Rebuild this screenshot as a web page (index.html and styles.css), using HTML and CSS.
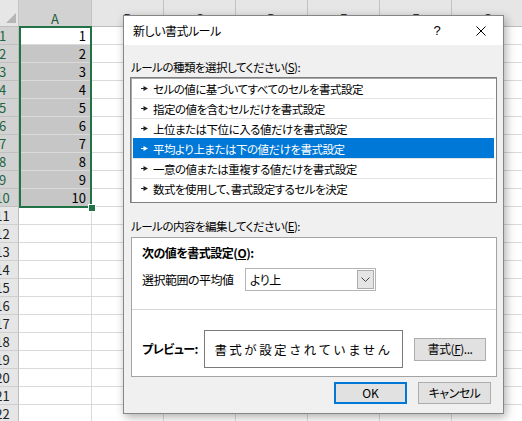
FILE: index.html
```html
<!DOCTYPE html>
<html lang="ja">
<head>
<meta charset="utf-8">
<title>新しい書式ルール</title>
<link rel="stylesheet" href="styles.css">
</head>
<body>
<div class="screen">
  <div class="sheet">
    <div class="corner"></div>
    <div class="ch sel">A</div><div class="ch">B</div><div class="ch">C</div><div class="ch">D</div><div class="ch">E</div><div class="ch">F</div><div class="ch">G</div>

    <div class="rh sel">1</div><div class="c a cur">1</div><div class="c"></div><div class="c"></div><div class="c"></div><div class="c"></div><div class="c"></div><div class="c"></div>
    <div class="rh sel">2</div><div class="c a">2</div><div class="c"></div><div class="c"></div><div class="c"></div><div class="c"></div><div class="c"></div><div class="c"></div>
    <div class="rh sel">3</div><div class="c a">3</div><div class="c"></div><div class="c"></div><div class="c"></div><div class="c"></div><div class="c"></div><div class="c"></div>
    <div class="rh sel">4</div><div class="c a">4</div><div class="c"></div><div class="c"></div><div class="c"></div><div class="c"></div><div class="c"></div><div class="c"></div>
    <div class="rh sel">5</div><div class="c a">5</div><div class="c"></div><div class="c"></div><div class="c"></div><div class="c"></div><div class="c"></div><div class="c"></div>
    <div class="rh sel">6</div><div class="c a">6</div><div class="c"></div><div class="c"></div><div class="c"></div><div class="c"></div><div class="c"></div><div class="c"></div>
    <div class="rh sel">7</div><div class="c a">7</div><div class="c"></div><div class="c"></div><div class="c"></div><div class="c"></div><div class="c"></div><div class="c"></div>
    <div class="rh sel">8</div><div class="c a">8</div><div class="c"></div><div class="c"></div><div class="c"></div><div class="c"></div><div class="c"></div><div class="c"></div>
    <div class="rh sel">9</div><div class="c a">9</div><div class="c"></div><div class="c"></div><div class="c"></div><div class="c"></div><div class="c"></div><div class="c"></div>
    <div class="rh sel">10</div><div class="c a">10</div><div class="c"></div><div class="c"></div><div class="c"></div><div class="c"></div><div class="c"></div><div class="c"></div>
    <div class="rh">11</div><div class="c"></div><div class="c"></div><div class="c"></div><div class="c"></div><div class="c"></div><div class="c"></div><div class="c"></div>
    <div class="rh">12</div><div class="c"></div><div class="c"></div><div class="c"></div><div class="c"></div><div class="c"></div><div class="c"></div><div class="c"></div>
    <div class="rh">13</div><div class="c"></div><div class="c"></div><div class="c"></div><div class="c"></div><div class="c"></div><div class="c"></div><div class="c"></div>
    <div class="rh">14</div><div class="c"></div><div class="c"></div><div class="c"></div><div class="c"></div><div class="c"></div><div class="c"></div><div class="c"></div>
    <div class="rh">15</div><div class="c"></div><div class="c"></div><div class="c"></div><div class="c"></div><div class="c"></div><div class="c"></div><div class="c"></div>
    <div class="rh">16</div><div class="c"></div><div class="c"></div><div class="c"></div><div class="c"></div><div class="c"></div><div class="c"></div><div class="c"></div>
    <div class="rh">17</div><div class="c"></div><div class="c"></div><div class="c"></div><div class="c"></div><div class="c"></div><div class="c"></div><div class="c"></div>
    <div class="rh">18</div><div class="c"></div><div class="c"></div><div class="c"></div><div class="c"></div><div class="c"></div><div class="c"></div><div class="c"></div>
    <div class="rh">19</div><div class="c"></div><div class="c"></div><div class="c"></div><div class="c"></div><div class="c"></div><div class="c"></div><div class="c"></div>
    <div class="rh">20</div><div class="c"></div><div class="c"></div><div class="c"></div><div class="c"></div><div class="c"></div><div class="c"></div><div class="c"></div>
    <div class="rh">21</div><div class="c"></div><div class="c"></div><div class="c"></div><div class="c"></div><div class="c"></div><div class="c"></div><div class="c"></div>
    <div class="rh">22</div><div class="c"></div><div class="c"></div><div class="c"></div><div class="c"></div><div class="c"></div><div class="c"></div><div class="c"></div>
  </div>

  <div class="selection"><span class="handle"></span></div>

  <div class="dialog">
    <div class="titlebar">
      <span class="title">新しい書式ルール</span>
      <span class="help">?</span>
      <span class="close"><svg width="10" height="10" viewBox="0 0 10 10"><path d="M0.5 0.5 L9.5 9.5 M9.5 0.5 L0.5 9.5" stroke="#000" stroke-width="1" fill="none"/></svg></span>
    </div>
    <div class="dbody">
      <div class="label label1">ルールの種類を選択してください(<u>S</u>):</div>
      <ul class="rules">
        <li><svg class="arrow" width="7" height="5" viewBox="0 0 7 5"><path d="M0 2 H3 V3 H0 Z M2.5 0 L7 2.5 L2.5 5 Z"/></svg>セルの値に基づいてすべてのセルを書式設定</li>
        <li><svg class="arrow" width="7" height="5" viewBox="0 0 7 5"><path d="M0 2 H3 V3 H0 Z M2.5 0 L7 2.5 L2.5 5 Z"/></svg>指定の値を含むセルだけを書式設定</li>
        <li><svg class="arrow" width="7" height="5" viewBox="0 0 7 5"><path d="M0 2 H3 V3 H0 Z M2.5 0 L7 2.5 L2.5 5 Z"/></svg>上位または下位に入る値だけを書式設定</li>
        <li class="active"><svg class="arrow" width="7" height="5" viewBox="0 0 7 5"><path d="M0 2 H3 V3 H0 Z M2.5 0 L7 2.5 L2.5 5 Z"/></svg>平均より上または下の値だけを書式設定</li>
        <li><svg class="arrow" width="7" height="5" viewBox="0 0 7 5"><path d="M0 2 H3 V3 H0 Z M2.5 0 L7 2.5 L2.5 5 Z"/></svg>一意の値または重複する値だけを書式設定</li>
        <li><svg class="arrow" width="7" height="5" viewBox="0 0 7 5"><path d="M0 2 H3 V3 H0 Z M2.5 0 L7 2.5 L2.5 5 Z"/></svg>数式を使用して、書式設定するセルを決定</li>
      </ul>
      <div class="label label2">ルールの内容を編集してください(<u>E</u>):</div>
      <div class="editor">
        <div class="ed-top">
          <div class="heading">次の値を書式設定(<u>O</u>):</div>
          <div class="avg-row">
            <span class="avg-label">選択範囲の平均値</span>
            <div class="select">
              <span class="select-text">より上</span>
              <span class="select-btn"><svg width="9" height="5" viewBox="0 0 9 5"><path d="M0.5 0.5 L4.5 4.5 L8.5 0.5" stroke="#444" stroke-width="1" fill="none"/></svg></span>
            </div>
          </div>
        </div>
        <div class="sep"></div>
        <div class="preview-row">
          <span class="heading preview-label">プレビュー:</span>
          <div class="preview">書式が設定されていません</div>
          <button class="btn fmt-btn">書式(<u>F</u>)...</button>
        </div>
      </div>
      <div class="actions">
        <button class="btn ok">OK</button>
        <button class="btn">キャンセル</button>
      </div>
    </div>
  </div>
</div>
</body>
</html>
```

FILE: styles.css
```css
* { box-sizing: border-box; margin: 0; padding: 0; }
html, body { width: 522px; height: 421px; overflow: hidden; background: #fff; }
body {
  font-family: "Noto Sans CJK JP", "Noto Sans", sans-serif;
  font-feature-settings: "palt";
  color: #000;
}
.screen { position: relative; width: 522px; height: 421px; overflow: hidden; }

/* spreadsheet */
.sheet {
  display: grid;
  grid-template-columns: 32px 73px repeat(6, 72px);
  grid-template-rows: 27px repeat(22, 18px);
  margin-left: -13px;
  font-size: 13px;
}
.sheet > div { border-right: 1px solid #dadada; border-bottom: 1px solid #dadada; }
.corner { position: relative; background: #e6e6e6; }
.corner::after {
  content: "";
  position: absolute;
  right: 2px; bottom: 3px;
  width: 10px; height: 10px;
  background: #b5b5b5;
  clip-path: polygon(100% 0, 100% 100%, 0 100%);
}
.sheet > .corner, .sheet > .ch { border-right-color: #c3c3c3; border-bottom-color: #bdbdbd; }
.ch {
  background: #e6e6e6;
  color: #333;
  display: flex;
  justify-content: center;
  align-items: flex-end;
  line-height: 13px;
  padding-bottom: 1px;
}
.ch.sel { background: #d2d2d2; color: #1f5e3c; }
.sheet > .rh {
  background: #e6e6e6;
  color: #222;
  text-align: center;
  line-height: 17px;
  border-right-color: #bdbdbd;
  border-bottom-color: #cfcfcf;
}
.sheet > .rh.sel { background: #d2d2d2; color: #1d6440; border-bottom-color: #c0c0c0; }
.c.a {
  background: #c6c6c6;
  text-align: right;
  padding-right: 5px;
  line-height: 18px;
  font-size: 13px;
}
.c.a.cur { background: #fff; }

.selection {
  position: absolute;
  left: 19px; top: 26px;
  width: 73px; height: 182px;
  border: 2px solid #217346;
}
.handle {
  position: absolute;
  right: -5px; bottom: -5px;
  width: 6px; height: 6px;
  background: #217346;
  outline: 1px solid #fff;
}

/* dialog */
.dialog {
  position: absolute;
  left: 123px; top: 15px;
  width: 381px; height: 399px;
  border: 1px solid #868686;
  background: #f0f0f0;
  box-shadow: 2px 3px 9px rgba(0, 0, 0, 0.32);
  display: flex;
  flex-direction: column;
  font-size: 12px;
  letter-spacing: -0.5px;
}
.titlebar {
  height: 29px;
  flex: none;
  background: #fff;
  display: flex;
  align-items: center;
  padding-left: 9px;
}
.title { flex: 1; font-size: 12px; }
.help, .close {
  width: 44px;
  height: 29px;
  display: flex;
  align-items: center;
  justify-content: center;
}
.help { font-size: 13px; font-family: "Liberation Sans", sans-serif; letter-spacing: 0; }
.close svg { display: block; }

.dbody { flex: 1; display: flex; flex-direction: column; padding: 0 6px; }
.label { line-height: 14px; margin-left: 1px; font-size: 11.5px; }
.label1 { padding-top: 15px; }
.label2 { margin-top: 16px; }

.rules {
  list-style: none;
  margin-top: 3px;
  height: 126px;
  background: #fff;
  border: 1px solid #7f7f7f;
  box-shadow: inset 1px 1px 0 #a8a8a8;
  padding: 0 2px;
}
.rules li {
  height: 20px;
  display: flex;
  align-items: center;
  padding-left: 8px;
  border-top: 1px solid #e3e3e3;
  line-height: 14px;
  font-size: 11.5px;
}
.rules li:first-child { border-top-color: transparent; }
.rules li.active { background: #0078d7; color: #fff; border-top-color: #0078d7; }
.arrow { fill: #222; margin-right: 5px; flex: none; }
.active .arrow { fill: #fff; }

.editor {
  margin-top: 4px;
  height: 140px;
  background: #fff;
  border: 1px solid #a3a3a3;
  margin-left: 1px;
}
.ed-top { padding: 8px 0 0 10px; }
.heading { font-weight: bold; line-height: 14px; }
.avg-row { display: flex; align-items: center; margin-top: 8px; height: 23px; }
.avg-label { width: 103px; }
.select {
  width: 131px;
  height: 23px;
  border: 1px solid #b4b4b4;
  display: flex;
  align-items: center;
  padding: 1px;
}
.select-text { flex: 1; padding-left: 3px; }
.select-btn {
  width: 17px;
  height: 19px;
  background: #e5e5e5;
  border: 1px solid #acacac;
  display: flex;
  align-items: center;
  justify-content: center;
}
.sep { margin-top: 18px; border-top: 1px solid #d6d6d6; }
.preview-row {
  display: flex;
  align-items: center;
  margin-top: 20px;
  padding-left: 10px;
  height: 38px;
}
.preview-label { width: 62px; }
.preview {
  width: 199px;
  height: 38px;
  border: 1px solid #7a7a7a;
  display: flex;
  align-items: center;
  justify-content: center;
  font-size: 12.5px;
  letter-spacing: 2.4px;
  font-feature-settings: normal;
}
.btn {
  font: inherit;
  font-size: 12px;
  letter-spacing: -0.5px;
  font-feature-settings: "palt";
  color: #000;
  background: #e1e1e1;
  border: 1px solid #adadad;
  width: 73px;
  height: 22px;
  line-height: 14px;
}
.fmt-btn { margin-left: 11px; width: 72px; height: 23px; }
.actions {
  display: flex;
  justify-content: flex-end;
  gap: 11px;
  margin-top: 5px;
  padding-right: 6px;
}
.btn.ok { border: 2px solid #0078d7; letter-spacing: 0; }
```
